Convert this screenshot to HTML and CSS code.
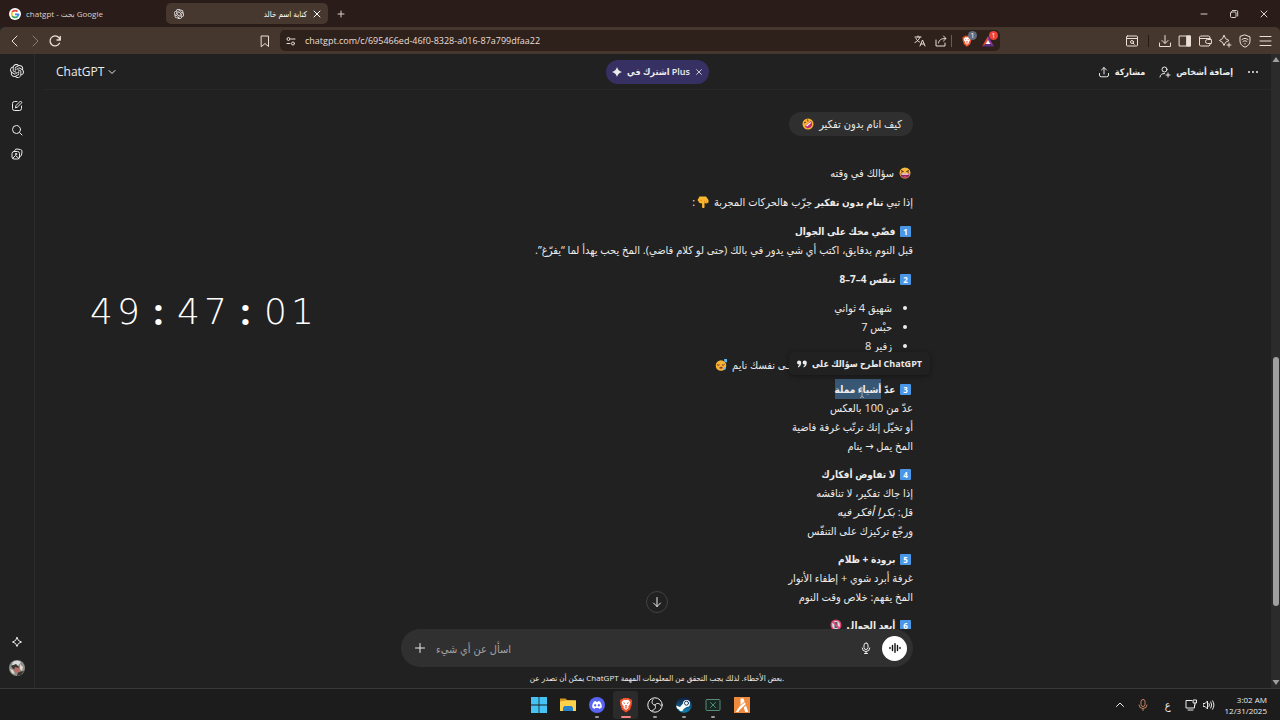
FILE: index.html
```
<!DOCTYPE html>
<html lang="ar">
<head>
    <meta charset="UTF-8">
    <meta name="viewport" content="width=device-width, initial-scale=1.0">
    <title>كتابة اسم خالد</title>
    <link rel="stylesheet" href="styles.css">
</head>
<body>

<!-- Shared icons -->
<svg class="sprite" aria-hidden="true">
    <symbol id="openai" viewBox="0 0 24 24"><path fill="currentColor" d="M22.2819 9.8211a5.9847 5.9847 0 0 0-.5157-4.9108 6.0462 6.0462 0 0 0-6.5098-2.9A6.0651 6.0651 0 0 0 4.9807 4.1818a5.9847 5.9847 0 0 0-3.9977 2.9 6.0462 6.0462 0 0 0 .7427 7.0966 5.98 5.98 0 0 0 .511 4.9107 6.051 6.051 0 0 0 6.5146 2.9001A5.9847 5.9847 0 0 0 13.2599 24a6.0557 6.0557 0 0 0 5.7718-4.2058 5.9894 5.9894 0 0 0 3.9977-2.9001 6.0557 6.0557 0 0 0-.7475-7.0729zm-9.022 12.6081a4.4755 4.4755 0 0 1-2.8764-1.0408l.1419-.0804 4.7783-2.7582a.7948.7948 0 0 0 .3927-.6813v-6.7369l2.02 1.1686a.071.071 0 0 1 .038.052v5.5826a4.504 4.504 0 0 1-4.4945 4.4944zm-9.6607-4.1254a4.4708 4.4708 0 0 1-.5346-3.0137l.142.0852 4.783 2.7582a.7712.7712 0 0 0 .7806 0l5.8428-3.3685v2.3324a.0804.0804 0 0 1-.0332.0615L9.74 19.9502a4.4992 4.4992 0 0 1-6.1408-1.6464zM2.3408 7.8956a4.485 4.485 0 0 1 2.3655-1.9728V11.6a.7664.7664 0 0 0 .3879.6765l5.8144 3.3543-2.0201 1.1685a.0757.0757 0 0 1-.071 0l-4.8303-2.7865A4.504 4.504 0 0 1 2.3408 7.872zm16.5963 3.8558L13.1038 8.364 15.1192 7.2a.0757.0757 0 0 1 .071 0l4.8303 2.7913a4.4944 4.4944 0 0 1-.6765 8.1042v-5.6772a.79.79 0 0 0-.407-.667zm2.0107-3.0231l-.142-.0852-4.7735-2.7818a.7759.7759 0 0 0-.7854 0L9.409 9.2297V6.8974a.0662.0662 0 0 1 .0284-.0615l4.8303-2.7866a4.4992 4.4992 0 0 1 6.6802 4.66zM8.3065 12.863l-2.02-1.1638a.0804.0804 0 0 1-.038-.0567V6.0742a4.4992 4.4992 0 0 1 7.3757-3.4537l-.142.0805L8.704 5.459a.7948.7948 0 0 0-.3927.6813zm1.0976-2.3654l2.602-1.4998 2.6069 1.4998v2.9994l-2.5974 1.4997-2.6067-1.4997Z"/></symbol>
    <symbol id="cross" viewBox="0 0 10 10"><path d="M2 2l6 6M8 2L2 8"/></symbol>
    <symbol id="brave" viewBox="0 0 16 18"><path fill="#f4502a" stroke="none" d="M5 1h6l1.500 1.500h1.500L15 5l-.6 1 .3 1.500-2 6.500L8 17.500 3.300 14l-2-6.500L1.600 6 1 5l1-2.500h1.500z"/><path fill="#fff" stroke="none" d="M8 3.500l2.500-.3L13 6l-1 3-1.500 1.500.5 1.500L8 14.500 5 12l.5-1.500L4 9 3 6l2.500-2.800z"/><path fill="#f4502a" stroke="none" d="M4.500 6l2.500.8-.8 1.200zM11.500 6L9 6.800l.8 1.200zM7 9h2l-.4 2H7.400zM6.200 12L8 11.200 9.800 12 8 13z"/></symbol>
</svg>

<!-- Tabs -->
<header class="tabbar">
    <div class="tab">
        <svg class="icon s12" viewBox="0 0 24 24"><circle cx="12" cy="12" r="12" fill="#fff" stroke="none"/><g fill="none" stroke-width="3.500" stroke-linecap="butt"><path stroke="#ea4335" d="M6.500 8A7 7 0 0 1 17 7"/><path stroke="#fbbc05" d="M6.500 16a7 7 0 0 1 0-8"/><path stroke="#34a853" d="M6.500 16a7 7 0 0 0 10 1.500"/><path stroke="#4285f4" d="M12 12.500h7a7 7 0 0 1-2.500 5"/></g></svg>
        <span>chatgpt - بحث Google</span>
    </div>
    <div class="tab active">
        <svg class="icon s10"><use href="#openai"/></svg>
        <span class="tab-title">كتابة اسم خالد</span>
        <button aria-label="Close tab"><svg class="icon s10"><use href="#cross"/></svg></button>
    </div>
    <button class="new-tab" aria-label="New tab"><svg class="icon s10" viewBox="0 0 10 10"><path d="M2 5h6M5 2v6"/></svg></button>
    <div class="window-buttons">
        <button aria-label="Minimize"><svg class="icon s10" viewBox="0 0 10 10"><path d="M2 5h6"/></svg></button>
        <button aria-label="Restore"><svg class="icon s10" viewBox="0 0 10 10"><rect x="1.500" y="3" width="5.500" height="5.500" rx="1"/><path d="M3.500 1.500h4A1.200 1.200 0 0 1 8.700 2.700V7"/></svg></button>
        <button aria-label="Close"><svg class="icon s10"><use href="#cross"/></svg></button>
    </div>
</header>

<!-- Address bar -->
<nav class="toolbar">
    <div class="nav-buttons">
        <button aria-label="Back"><svg class="icon s14" viewBox="0 0 14 14"><path d="M9 2L4 7l5 5"/></svg></button>
        <button class="dim" aria-label="Forward"><svg class="icon s14" viewBox="0 0 14 14"><path d="M5 2l5 5-5 5"/></svg></button>
        <button aria-label="Reload"><svg class="icon s14" viewBox="0 0 14 14"><path stroke-width="1.300" d="M11.500 9.300A5 5 0 1 1 12 6M12.300 2.500V6H9"/></svg></button>
        <button class="bookmark" aria-label="Bookmark"><svg class="icon s14" viewBox="0 0 14 14"><path d="M3.500 2h7v10.500L7 9.500l-3.500 3z"/></svg></button>
    </div>
    <div class="address">
        <svg class="icon s10" viewBox="0 0 10 10"><circle cx="2.500" cy="3" r="1.500"/><path d="M5.500 3H9M1 7.500h3"/><circle cx="7" cy="7.500" r="1.500"/></svg>
        <input type="text" aria-label="Address" value="chatgpt.com/c/695466ed-46f0-8328-a016-87a799dfaa22">
        <button aria-label="Translate"><svg class="icon s12" viewBox="0 0 12 12"><path d="M1 2h6M4 1v1M6 2C5 5 3 6.500 1 7.500M2 3.500c1 2 2 3 3.500 3.500M6 11l2.500-6L11 11M7 9h3"/></svg></button>
        <div class="share">
            <button aria-label="Share"><svg class="icon s12" viewBox="0 0 12 12"><path d="M1 5v6h9V8M3.500 8C4 5 6 3.500 10.500 3.500M8.500 1l2.500 2.500L8.500 6"/></svg></button>
            <span class="divider light"></span>
        </div>
        <button class="badged" aria-label="Shields"><svg class="icon s12"><use href="#brave"/></svg><span class="badge gray">1</span></button>
        <button class="badged" aria-label="Rewards"><svg class="icon s12" viewBox="0 0 12 12"><g stroke="none"><path fill="#e8452f" d="M6 1L0 11.500l6-3.500z"/><path fill="#8c3aa5" d="M6 1l6 10.500L6 8z"/><path fill="#5b2c83" d="M0 11.500L6 8l6 3.500z"/><path fill="#fff" d="M6 5l2.300 4H3.700z"/></g></svg><span class="badge red">1</span></button>
    </div>
    <div class="tools">
        <button aria-label="Search page"><svg class="icon s14" viewBox="0 0 14 14"><rect x="1.500" y="2" width="11" height="10" rx="1"/><path d="M1.500 4.500h11"/><circle cx="7" cy="8" r="1.500"/><path d="M8.200 9.200l1 1"/></svg></button>
        <span class="divider"></span>
        <button aria-label="Downloads"><svg class="icon s14" viewBox="0 0 14 14"><path d="M7 1.500V9M4 6.500L7 9.500l3-3M1.500 9v3.500h11V9"/></svg></button>
        <button aria-label="Side panel"><svg class="icon s14" viewBox="0 0 14 14"><rect x="1.500" y="2" width="11" height="10"/><path fill="currentColor" d="M9 2h3.500v10H9z"/></svg></button>
        <button aria-label="Wallet"><svg class="icon s14" viewBox="0 0 14 14"><path d="M12 4.500V3L10.500 2h-8L1.500 3v8l1 1H11l1-1V9.500M1.500 4.500H12M13 5.500H9.500a2 2 0 0 0 0 4H13z"/></svg></button>
        <button aria-label="Assistant"><svg class="icon s14" viewBox="0 0 14 14"><path d="M6 1.500Q6.800 5.500 11 6.500 6.800 7.500 6 11.500 5.200 7.500 1.500 6.500 5.200 5.500 6 1.500zM11 9v4M9 11h4"/></svg></button>
        <button aria-label="VPN"><svg class="icon s14" viewBox="0 0 14 14"><path d="M7 1l5 1.800V7c0 3-2 5-5 6.200C4 12 2 10 2 7V2.800zM4 5.500c2-1.500 4-1.500 6 0M5 7.500c1.500-1 2.500-1 4 0M7 9.500v.5"/></svg></button>
        <button aria-label="Menu"><svg class="icon s14" viewBox="0 0 14 14"><path d="M2 2.500h11M2 7h11M2 11.500h11"/></svg></button>
    </div>
</nav>

<div class="app">
    <aside class="sidebar">
        <a href="#" class="logo" aria-label="ChatGPT"><svg class="icon s14"><use href="#openai"/></svg></a>
        <button aria-label="New chat"><svg class="icon s12" viewBox="0 0 12 12"><path d="M6 1.500H3.500a2 2 0 0 0-2 2v5a2 2 0 0 0 2 2h5a2 2 0 0 0 2-2V6M4.500 7.500L5 5.500l4.500-4.500L11 2.500 6.500 7z"/></svg></button>
        <button aria-label="Search"><svg class="icon s12" viewBox="0 0 12 12"><circle cx="5.500" cy="5.500" r="4"/><path d="M8.500 8.500l2.500 2.500"/></svg></button>
        <button aria-label="Images"><svg class="icon s12" viewBox="0 0 12 12"><rect x="1" y="3.500" width="7.500" height="7.500" rx="2"/><path d="M3.500 3.500l.3-1A2 2 0 0 1 6 1l3.500.6A2 2 0 0 1 11 4l-.6 3.500-1.900 1.500M2 10l2.500-2.500L8 10.500"/><circle cx="5" cy="6" r=".7"/></svg></button>
        <button class="upgrade" aria-label="Upgrade"><svg class="icon s12" viewBox="0 0 12 12"><path d="M6 1.500Q6.600 5.400 10.500 6 6.600 6.600 6 10.500 5.400 6.600 1.500 6 5.400 5.400 6 1.500z"/></svg></button>
        <button aria-label="Profile"><svg class="icon s16" viewBox="0 0 16 16"><g stroke="none"><circle cx="8" cy="8" r="8" fill="#8d8f89"/><path fill="#d9dcdb" d="M4 2a8 8 0 0 1 8 0L9 6 3 5z"/><path fill="#39352f" d="M2 6l5-2 3 3-2 3-4-1zM9 12l6-1-3 4-4 1z"/><path fill="#b56d65" d="M6 7l4 1 1 4-4 1-2-3z"/><path fill="#e6d6cf" d="M11 4l3 3-1 4-2-2zM1 9l3 1 2 4-3-1z"/></g></svg></button>
    </aside>

    <main class="main">
        <div class="chat-header">
            <button class="model">ChatGPT <svg class="icon s10" viewBox="0 0 10 10"><path d="M2 3.500l3 3 3-3"/></svg></button>
            <div class="plus">
                <svg class="icon s10" viewBox="0 0 10 10"><path fill="currentColor" stroke="none" d="M5 0Q6 4 10 5 6 6 5 10 4 6 0 5 4 4 5 0z"/></svg>
                <a href="#">اشترك في Plus</a>
                <button aria-label="Dismiss"><svg class="icon s8"><use href="#cross"/></svg></button>
            </div>
            <div class="chat-actions">
                <button><svg class="icon s12" viewBox="0 0 12 12"><path d="M6 8V1.500M3.500 4L6 1.500 8.500 4M1.500 7.500V9a1.800 1.800 0 0 0 1.800 1.800h5.400A1.800 1.800 0 0 0 10.500 9V7.500"/></svg>مشاركة</button>
                <button><svg class="icon s12" viewBox="0 0 12 12"><circle cx="5.500" cy="3.500" r="2.500"/><path d="M1 11c.3-2.500 2-3.500 4.500-3.500M9 7v4M7 9h4"/></svg>إضافة أشخاص</button>
                <button aria-label="More"><svg class="icon s12" viewBox="0 0 12 12"><g fill="currentColor" stroke="none"><circle cx="2" cy="6" r="1"/><circle cx="6" cy="6" r="1"/><circle cx="10" cy="6" r="1"/></g></svg></button>
            </div>
        </div>

        <div class="timer"><span>4</span><span>9</span><span class="colon">:</span><span>4</span><span>7</span><span class="colon">:</span><span>0</span><span>1</span></div>

        <div class="thread" dir="rtl">
            <div class="bubble">كيف انام بدون تفكير <svg class="emoji" viewBox="0 0 12 12"><circle cx="6" cy="6" r="5.500" fill="#f9b233"/><path fill="#c02878" d="M3 8l6-5c2 3 1 6-2 7-2 .5-3.500-.5-4-2z"/><path fill="#fff" d="M4 7.500L8.500 4l.5 1-4 3.500z"/><path stroke="#593522" d="M2 5l2-1M5.500 1.500l.5 2"/></svg></div>

            <div class="answer">
                <p><svg class="emoji" viewBox="0 0 12 12"><circle cx="6" cy="6" r="5.500" fill="#f9b93c"/><path stroke="#593522" fill="none" d="M2 3.500l2.500 1L2 5.300M10 3.500l-2.500 1 2.500.8"/><path fill="#8e2461" d="M1.500 6.500h9c0 3-2 4.500-4.500 4.500S1.500 9.500 1.500 6.500z"/><path fill="#fff" d="M2.500 6.500h7v1.200h-7z"/><path fill="#ef5a8a" d="M4 10c1-1 3-1 4 0-1 .8-3 .8-4 0z"/></svg> سؤالك في وقته</p>
                <p>إذا تبي <strong>تنام بدون تفكير</strong> جرّب هالحركات المجربة <svg class="emoji" viewBox="0 0 12 12"><path fill="#fbb72e" d="M2.500.5h6.500l2.500 3.500v2.500L9.500 7.500 7.500 7v4a1.200 1.200 0 0 1-2.400 0V7.500L2.500 7 .5 4z"/><path stroke="#d98a16" stroke-width=".7" fill="none" d="M7.500 4.500V7M9.500 4.500v2.800M2.500 4l3 1"/></svg>:</p>
                <p><strong><span class="keycap">1</span> فضّي مخك على الجوال</strong><br>قبل النوم بدقايق، اكتب أي شي يدور في بالك (حتى لو كلام فاضي). المخ يحب يهدأ لما “يفرّغ”.</p>
                <p><strong><span class="keycap">2</span> تنفّس 4–7–8</strong></p>
                <ul>
                    <li>شهيق 4 ثواني</li>
                    <li>حبْس 7</li>
                    <li>زفير 8</li>
                </ul>
                <p class="after-list">ـى نفسك نايم <svg class="emoji" viewBox="0 0 12 12"><circle cx="6" cy="6.500" r="5.300" fill="#f8b035"/><path stroke="#593522" fill="none" d="M2 5.500q1 1.500 2.500.3M7 5.800q1.500 1 2.500-.5"/><path fill="#8c3b24" d="M4 9q2-2.500 4 0-2 1.500-4 0z"/><path fill="#62b7f0" d="M9 0h3v3.500L9.500 3zM9 8l2 1-1 2-1.500-.8z"/></svg></p>
                <p class="tight"><strong><span class="keycap">3</span> عدّ <mark>أشياء مملة</mark></strong><br>عدّ من 100 بالعكس<br>أو تخيّل إنك ترتّب غرفة فاضية<br>المخ يمل → ينام</p>
                <p class="late"><strong><span class="keycap">4</span> لا تفاوض أفكارك</strong><br>إذا جاك تفكير، لا تناقشه<br>قل: <em>بكرا أفكر فيه</em><br>ورجّع تركيزك على التنفّس</p>
                <p class="late"><strong><span class="keycap">5</span> برودة + ظلام</strong><br>غرفة أبرد شوي + إطفاء الأنوار<br>المخ يفهم: خلاص وقت النوم</p>
                <p class="late"><strong><span class="keycap">6</span> أبعد الجوال</strong> <svg class="emoji" viewBox="0 0 12 12"><circle cx="6" cy="6" r="4.700" fill="#d8d8e0" stroke="#e0446c" stroke-width="1.600"/><rect x="4.500" y="3" width="3" height="6" fill="#555f75"/><path stroke="#e0446c" stroke-width="1.600" d="M2.800 2.800l6.400 6.400"/></svg></p>
            </div>

            <button class="ask" dir="ltr"><svg class="icon s10" viewBox="0 0 10 10"><path fill="currentColor" stroke="none" d="M0 3.500a2 2 0 1 1 4.200 0C4.200 6 3 7.800 1 8.500V7c.8-.4 1.300-1 1.400-1.600A2 2 0 0 1 0 3.500zM5.600 3.500a2 2 0 1 1 4.200 0c0 2.500-1.200 4.300-3.200 5V7c.8-.4 1.300-1 1.400-1.600a2 2 0 0 1-2.400-1.900z"/></svg><span>اطرح سؤالك على ChatGPT</span></button>
            <svg class="caret" viewBox="0 0 6 12"><path d="M1 1q2 0 2 1.500V10q0 1.500-2 1.500M5 1Q3 1 3 2.500M5 11.500Q3 11.500 3 10"/></svg>
        </div>

        <div class="bottom">
            <button class="scroll-down" aria-label="Scroll down"><svg class="icon s12" viewBox="0 0 12 12"><path d="M6 1.500v9M2.500 7L6 10.500 9.500 7"/></svg></button>
            <form class="composer">
                <button type="button" aria-label="Add"><svg class="icon s12" viewBox="0 0 12 12"><path d="M6 1.500v9M1.500 6h9"/></svg></button>
                <input type="text" placeholder="اسأل عن أي شيء" aria-label="اسأل عن أي شيء">
                <button type="button" aria-label="Dictate"><svg class="icon s12" viewBox="0 0 12 12"><rect x="4" y="1" width="4" height="6.500" rx="2"/><path d="M2.200 6a3.800 3.500 0 0 0 7.600 0M6 9.500v2M4.500 11.500h3"/></svg></button>
                <button type="button" class="voice" aria-label="Voice"><svg class="icon s12" viewBox="0 0 12 12"><path stroke-width="1.400" d="M1 5.500v1M3.500 3.500v5M6 1.800v8.400M8.500 3.500v5M11 5.500v1"/></svg></button>
            </form>
            <p class="disclaimer">يمكن أن تصدر عن ChatGPT بعض الأخطاء. لذلك يجب التحقق من المعلومات المهمة.</p>
        </div>
    </main>

    <div class="scrollbar">
        <svg class="icon s8" viewBox="0 0 8 8"><path fill="currentColor" stroke="none" d="M4 1l3.500 5h-7z"/></svg>
        <div class="track"><div class="thumb"></div></div>
        <svg class="icon s8" viewBox="0 0 8 8"><path fill="currentColor" stroke="none" d="M.5 2h7L4 7z"/></svg>
    </div>
</div>

<!-- Taskbar -->
<footer class="taskbar">
    <div class="apps">
        <button aria-label="Start"><svg class="icon s16" viewBox="0 0 16 16"><path fill="#45c3f5" stroke="none" d="M0 0h7.600v7.600H0zM8.400 0H16v7.600H8.400zM0 8.400h7.600V16H0zM8.400 8.400H16V16H8.400z"/></svg></button>
        <button aria-label="Explorer"><svg class="icon s16" viewBox="0 0 16 16"><g stroke="none"><path fill="#d9961e" d="M0 1.500h5.500l2 2H14V6H0z"/><path fill="#fbd04a" d="M0 4.500L7 3.300h9V14H0z"/><path fill="#2782ca" d="M3 14v-3.500L4.500 9h7l1.500 1.500V14z"/></g></svg></button>
        <button class="open" aria-label="Discord"><svg class="icon s16" viewBox="0 0 16 16"><circle cx="8" cy="8" r="8" fill="#5865f2" stroke="none"/><path fill="#fff" stroke="none" d="M5 4.500l1.500-.5.5.7h2l.5-.7 1.500.5c1.500 2 2 4 1.700 6L10.500 12l-.8-1H6.300l-.8 1-2.200-1.500c-.3-2 .2-4 1.700-6z"/><ellipse cx="6.200" cy="8.200" rx="1" ry="1.200" fill="#5865f2" stroke="none"/><ellipse cx="9.800" cy="8.200" rx="1" ry="1.200" fill="#5865f2" stroke="none"/></svg></button>
        <button class="open current" aria-label="Brave"><svg class="icon s16"><use href="#brave"/></svg></button>
        <button class="open" aria-label="OBS"><svg class="icon s16" viewBox="0 0 16 16"><circle cx="8" cy="8" r="7.200"/><path d="M8 8C5 8 4 5 6 2.500M8 8c1.500-2.500 4.500-2 6 .5M8 8c1.500 2.500 0 5-3 5.500"/></svg></button>
        <button class="open" aria-label="Steam"><svg class="icon s16" viewBox="0 0 16 16"><defs><linearGradient id="steam" x2="0" y2="1"><stop stop-color="#101b3c"/><stop offset="1" stop-color="#1387b8"/></linearGradient></defs><circle cx="8" cy="8" r="7.800" fill="url(#steam)" stroke="none"/><path fill="#fff" stroke="none" d="M0 8.500l4 1.500 3-3.500a3.500 3.500 0 1 1 3.500 3.500L7.500 12a2.300 2.300 0 0 1-4.500.5L1 11.500z"/><circle cx="10.500" cy="6.200" r="2" fill="#fff" stroke="#1a3a63"/></svg></button>
        <button class="open" aria-label="Terminal"><svg class="icon s16" viewBox="0 0 16 16"><g stroke="#588a78"><rect x="1" y="2.500" width="14" height="11" rx="1" fill="#172823"/><path d="M5.500 5.500l5 5M10.500 5.500l-5 5"/></g></svg></button>
        <button aria-label="FiveM"><svg class="icon s16" viewBox="0 0 16 16"><path fill="#f08a3c" stroke="none" d="M0 0h16v16H0z"/><path fill="#fff" stroke="none" d="M6.500 1.500h3l1 3L6.500 8zM6 9l5-3.700.7 2L5 13.500 4.500 15H1.800zM9.700 10.500L12 8.500l2.200 6.500h-3z"/></svg></button>
    </div>
    <div class="tray">
        <button aria-label="Hidden icons"><svg class="icon s10" viewBox="0 0 10 10"><path d="M1.500 6.500L5 3l3.500 3.500"/></svg></button>
        <svg class="icon s12 mic" viewBox="0 0 12 12"><rect x="4" y=".5" width="4" height="7" rx="2"/><path d="M2 6a4 3.500 0 0 0 8 0M6 9.500v2"/></svg>
        <span class="lang">ع</span>
        <svg class="icon s12" viewBox="0 0 12 12"><path d="M7 1.500H1V9h8.500V6M3 11h5M8.500 1h3v3h-3zM10 4v2"/></svg>
        <svg class="icon s12" viewBox="0 0 12 12"><path d="M.5 4.500H2L4.500 2v8L2 7.500H.5zM6 4.500q1 1.500 0 3M7.800 3q2 3 0 6M9.600 1.800q2.800 4.200 0 8.400"/></svg>
        <div class="clock">3:02 AM<br>12/31/2025</div>
    </div>
</footer>

</body>
</html>
```
FILE: styles.css
```
* {
    box-sizing: border-box;
}
body {
    font-family: "Open Sans", "DejaVu Sans Condensed", "DejaVu Sans", sans-serif;
    font-size: 11px;
    margin: 0;
    height: 100vh;
    display: flex;
    flex-direction: column;
    overflow: hidden;
    background-color: #212121;
    color: #ececec;
}
button, input {
    font: inherit;
    color: inherit;
    background: none;
    border: 0;
    padding: 0;
    margin: 0;
    outline: none;
}
button {
    display: flex;
    align-items: center;
    justify-content: center;
    flex-shrink: 0;
    white-space: nowrap;
    cursor: pointer;
}
a {
    color: inherit;
    text-decoration: none;
}
p {
    margin: 0;
}
.sprite {
    display: none;
}
.icon {
    display: block;
    flex-shrink: 0;
    fill: none;
    stroke: currentColor;
    stroke-width: 1;
    stroke-linecap: round;
    stroke-linejoin: round;
}
.icon use[href="#openai"] {
    stroke: none;
}
.s8 { width: 8px; height: 8px; }
.s10 { width: 10px; height: 10px; }
.s12 { width: 12px; height: 12px; }
.s14 { width: 14px; height: 14px; }
.s16 { width: 16px; height: 16px; }

/* Browser */
.tabbar {
    display: flex;
    align-items: center;
    height: 27px;
    background-color: #291c19;
    font-size: 9px;
    color: #d8d0cc;
}
.tab {
    display: flex;
    align-items: center;
    gap: 5px;
    width: 166px;
    height: 21px;
    padding: 0 9px;
    font-size: 8px;
}
.tab.active {
    width: 162px;
    padding: 0 6px 0 8px;
    border-radius: 5px;
    background-color: #46372f;
    color: #fff;
}
.tab-title {
    flex: 1;
    text-align: right;
}
.new-tab {
    margin-left: 8px;
}
.window-buttons {
    display: flex;
    gap: 20px;
    margin-left: auto;
    padding-right: 11px;
}
.toolbar {
    display: grid;
    grid-template-columns: 1fr 720px 1fr;
    align-items: center;
    height: 27px;
    background-color: #45372e;
    border-radius: 5px 5px 0 0;
    color: #e9dfd8;
}
.nav-buttons {
    display: flex;
    gap: 6px;
    padding: 0 8px;
}
.dim {
    color: #8a7d75;
}
.bookmark {
    margin-left: auto;
}
.address {
    display: flex;
    align-items: center;
    gap: 9px;
    height: 21px;
    padding: 0 6px;
    border-radius: 5px;
    background-color: #2e211c;
    font-size: 9px;
}
.address input {
    flex: 1;
    min-width: 0;
}
.share {
    display: flex;
    align-items: center;
    gap: 4px;
}
.divider {
    width: 1px;
    height: 12px;
    background-color: #241a16;
}
.divider.light {
    background-color: #6c5d54;
}
.badged {
    position: relative;
}
.badge {
    position: absolute;
    left: 7px;
    top: -4px;
    width: 9px;
    height: 9px;
    border-radius: 50%;
    font-size: 7px;
    line-height: 9px;
    color: #fff;
}
.badge.gray { background-color: #656a7c; }
.badge.red { background-color: #ec4134; }
.tools {
    justify-self: end;
    display: flex;
    align-items: center;
    gap: 6px;
    padding-right: 8px;
}
.tools .divider {
    margin: 0 3px;
}

/* Sidebar */
.app {
    flex: 1;
    min-height: 0;
    display: flex;
}
.sidebar {
    display: flex;
    flex-direction: column;
    align-items: center;
    gap: 12px;
    width: 35px;
    padding: 10px 0 12px;
    border-right: 1px solid #2c2c2c;
}
.sidebar .logo {
    margin-bottom: 10px;
}
.upgrade {
    margin-top: auto;
}

/* Chat */
.main {
    position: relative;
    flex: 1;
    min-width: 0;
    display: flex;
    flex-direction: column;
    padding-left: 8px;
}
.chat-header {
    display: grid;
    grid-template-columns: 1fr auto 1fr;
    align-items: center;
    height: 36px;
    padding: 0 12px 0 13px;
    border-bottom: 1px solid #282828;
}
.model {
    justify-self: start;
    gap: 3px;
    font-size: 12px;
}
.plus {
    display: flex;
    align-items: center;
    gap: 5px;
    height: 24px;
    padding: 0 6px;
    border-radius: 12px;
    background-color: #373063;
    font-size: 9px;
    font-weight: 600;
}
.chat-actions {
    justify-self: end;
    display: flex;
    gap: 14px;
    font-size: 9px;
    font-weight: bold;
}
.chat-actions button {
    gap: 5px;
}
.timer {
    position: absolute;
    left: 55px;
    top: 233px;
    display: flex;
    gap: 4px;
    font-family: "DejaVu Sans Light", "DejaVu Sans", sans-serif;
    font-size: 36px;
    font-weight: 200;
    line-height: 50px;
    color: #fff;
}
.timer span {
    width: 23px;
    text-align: center;
}
.timer .colon {
    width: 29px;
    font-family: "Open Sans", sans-serif;
    font-weight: bold;
}
.thread {
    position: relative;
    flex: 1;
    min-height: 0;
    width: 512px;
    margin: 0 auto;
    padding-top: 22px;
    line-height: 19px;
}
.thread strong {
    font-size: 10px;
    line-height: 14px;
}
.bubble {
    width: fit-content;
    padding: 2px 11px 3px;
    border-radius: 12px;
    background-color: #2f2f2f;
}
.answer {
    display: flex;
    flex-direction: column;
    gap: 10px;
    margin-top: 27px;
}
.answer ul {
    margin: 0;
    padding: 0 21px 0 0;
}
.after-list {
    margin-top: -10px;
    padding-right: 124px;
}
.tight { margin-top: -5px; }
.late { margin-top: -1px; }
.emoji {
    width: 12px;
    height: 12px;
    margin: 0 2px;
    vertical-align: -2px;
}
.keycap {
    display: inline-block;
    width: 11px;
    height: 11px;
    margin: 0 2px;
    border-radius: 1px;
    background-color: #4a97e8;
    color: #fff;
    font-size: 8px;
    line-height: 11px;
    text-align: center;
    vertical-align: 0;
}
mark {
    padding: 3px 0;
    background-color: #385775;
    color: inherit;
}
.ask {
    position: absolute;
    right: -17px;
    top: 262px;
    gap: 5px;
    height: 23px;
    padding: 0 8px;
    border-radius: 5px;
    background-color: #212121;
    box-shadow: 0 1px 5px rgba(0, 0, 0, 0.4);
    font-size: 9px;
    font-weight: bold;
}
.caret {
    position: absolute;
    right: 48px;
    top: 296px;
    width: 6px;
    height: 12px;
    fill: none;
    stroke: #aaa;
}
.bottom {
    position: relative;
    width: 512px;
    margin: 0 auto;
    background-color: #212121;
}
.scroll-down {
    position: absolute;
    left: 245px;
    top: -38px;
    width: 22px;
    height: 22px;
    border: 1px solid #424242;
    border-radius: 50%;
    background-color: #212121;
}
.composer {
    display: flex;
    align-items: center;
    gap: 10px;
    height: 38px;
    padding: 0 6px 0 13px;
    border-radius: 19px;
    background-color: #303030;
}
.composer input {
    flex: 1;
    min-width: 0;
}
.composer input::placeholder {
    color: #a5a5a5;
    opacity: 1;
}
.voice {
    width: 25px;
    height: 25px;
    border-radius: 50%;
    background-color: #fff;
    color: #111;
}
.disclaimer {
    height: 21px;
    line-height: 21px;
    font-size: 8px;
    text-align: center;
    white-space: nowrap;
}
.scrollbar {
    display: flex;
    flex-direction: column;
    align-items: center;
    width: 9px;
    padding: 2px 0;
    background-color: #2b2b2b;
    color: #9f9f9f;
}
.track {
    flex: 1;
    display: flex;
    flex-direction: column;
    justify-content: flex-end;
    padding-bottom: 72px;
}
.thumb {
    width: 6px;
    height: 46%;
    border-radius: 3px;
    background-color: #9f9f9f;
}

/* Taskbar */
.taskbar {
    display: grid;
    grid-template-columns: 1fr auto 1fr;
    align-items: center;
    height: 32px;
    border-top: 1px solid #383838;
    background-color: #1c1c1c;
}
.apps {
    grid-column: 2;
    display: flex;
    gap: 4px;
}
.apps button {
    position: relative;
    width: 25px;
    height: 28px;
    border-radius: 3px;
}
.apps .current {
    background-color: #2b2b2b;
}
.apps .open::after {
    content: "";
    position: absolute;
    bottom: 1px;
    width: 4px;
    height: 2px;
    border-radius: 1px;
    background-color: #999;
}
.apps .current::after {
    width: 10px;
    background-color: #f0837c;
}
.tray {
    justify-self: end;
    display: flex;
    align-items: center;
    gap: 6px;
    padding-right: 13px;
}
.tray .mic {
    margin: 0 10px 0 6px;
    color: #c0835f;
}
.lang {
    margin-right: 8px;
}
.clock {
    margin-left: 4px;
    font-size: 8px;
    line-height: 11px;
    text-align: right;
}
```
